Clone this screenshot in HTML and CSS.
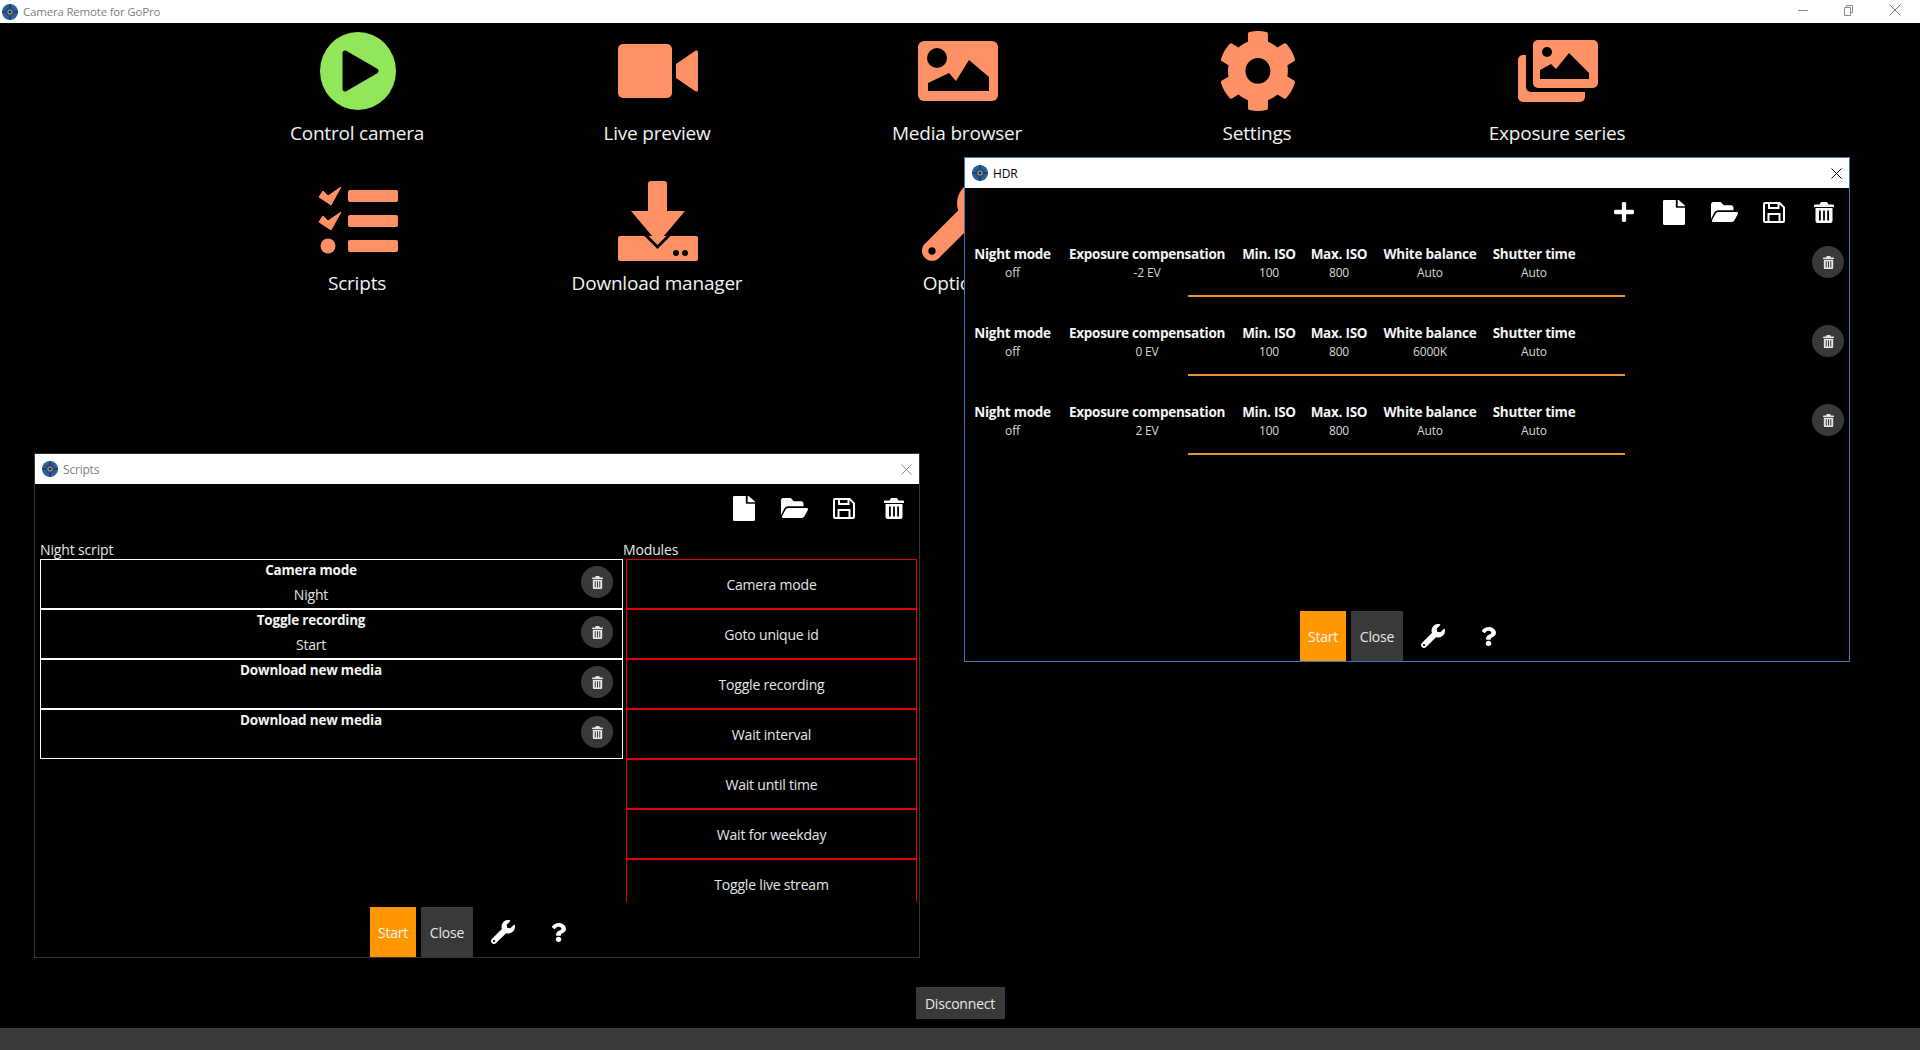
FILE: index.html
```html
<!DOCTYPE html>
<html lang="en">
<head>
<meta charset="utf-8">
<title>Camera Remote for GoPro</title>
<link rel="stylesheet" href="styles.css">
</head>
<body>
<svg class="defs" aria-hidden="true">
  <defs>
    <symbol id="appicon" viewBox="0 0 16 16">
      <circle cx="8" cy="8" r="8" fill="#2a62a0"/>
      <path d="M0 8h16M8 0v16" stroke="#123a66" stroke-width="1.5"/>
      <circle cx="8" cy="8" r="4.6" fill="#33475a"/>
      <circle cx="8" cy="8" r="2.6" fill="#8a99a6"/>
      <circle cx="8" cy="8" r="1.3" fill="#1a2530"/>
    </symbol>
    <symbol id="plus" viewBox="0 32 448 448" preserveAspectRatio="none"><path d="M416 208H272V64c0-17.67-14.33-32-32-32h-32c-17.67 0-32 14.33-32 32v144H32c-17.67 0-32 14.33-32 32v32c0 17.67 14.33 32 32 32h144v144c0 17.67 14.33 32 32 32h32c17.67 0 32-14.33 32-32V304h144c17.67 0 32-14.33 32-32v-32c0-17.67-14.33-32-32-32z"/></symbol>
    <symbol id="file" viewBox="0 0 384 512" preserveAspectRatio="none"><path d="M224 136V0H24C10.7 0 0 10.7 0 24v464c0 13.3 10.7 24 24 24h336c13.3 0 24-10.7 24-24V160H248c-13.2 0-24-10.8-24-24zm160-14.1v6.1H256V0h6.1c6.4 0 12.5 2.5 17 7l97.9 98c4.5 4.5 7 10.6 7 16.9z"/></symbol>
    <symbol id="folder" viewBox="0 64 576 384" preserveAspectRatio="none"><path d="M572.694 292.093L500.27 416.248A63.997 63.997 0 0 1 444.989 448H45.025c-18.523 0-30.064-20.093-20.731-36.093l72.424-124.155A64 64 0 0 1 152 256h399.964c18.523 0 30.064 20.093 20.73 36.093zM152 224h328v-48c0-26.51-21.49-48-48-48H272l-64-64H48C21.49 64 0 85.49 0 112v278.046l69.077-118.418C86.214 242.25 117.989 224 152 224z"/></symbol>
    <symbol id="save" viewBox="0 0 22 21" preserveAspectRatio="none"><path fill-rule="evenodd" d="M2 0h15l5 5v14a2 2 0 0 1-2 2H2a2 2 0 0 1-2-2V2a2 2 0 0 1 2-2zM2 2v17h2.500v-8h13v8H20V5.800L16.500 2.300V7H5V2zM7 2v3h7.500V2zM6.500 13v6h9v-6z"/></symbol>
    <symbol id="trash" viewBox="0 0 20 21" preserveAspectRatio="none"><path fill-rule="evenodd" d="M7 0h6l1.500 2.500H19a1 1 0 0 1 1 1V5H0V3.500a1 1 0 0 1 1-1h4.500zM1.500 6h17v13a2 2 0 0 1-2 2h-13a2 2 0 0 1-2-2zM5 8.500v10h1.800v-10zM9.100 8.500v10h1.800v-10zM13.200 8.500v10H15v-10z"/></symbol>
    <symbol id="wrench" viewBox="0 0 512 512" preserveAspectRatio="none"><path d="M507.73 109.1c-2.24-9.03-13.54-12.09-20.12-5.51l-74.36 74.36-67.88-11.31-11.31-67.88 74.36-74.36c6.62-6.62 3.43-17.9-5.66-20.16-47.38-11.74-99.55.91-136.58 37.93-39.64 39.64-50.55 97.1-34.05 147.2L18.74 402.76c-24.99 24.99-24.99 65.51 0 90.5 24.99 24.99 65.51 24.99 90.5 0l213.21-213.21c50.12 16.71 107.47 5.68 147.37-34.22 37.07-37.07 49.7-89.32 37.91-136.73zM64 472c-13.25 0-24-10.75-24-24 0-13.26 10.75-24 24-24s24 10.74 24 24c0 13.25-10.75 24-24 24z"/></symbol>
    <symbol id="question" viewBox="29 0 349 512" preserveAspectRatio="none"><path d="M202.021 0C122.202 0 70.503 32.703 29.914 91.026c-7.363 10.58-5.093 25.086 5.178 32.874l43.138 32.709c10.373 7.865 25.132 6.026 33.253-4.148 25.049-31.381 43.63-49.449 82.757-49.449 30.764 0 68.816 19.799 68.816 49.631 0 22.552-18.617 34.134-48.993 51.164-35.423 19.86-82.299 44.576-82.299 106.405V320c0 13.255 10.745 24 24 24h72.471c13.255 0 24-10.745 24-24v-5.773c0-42.86 125.268-44.645 125.268-160.627C377.504 66.256 286.902 0 202.021 0zM192 373.459c-38.196 0-69.271 31.075-69.271 69.271 0 38.195 31.075 69.27 69.271 69.27s69.271-31.075 69.271-69.271-31.075-69.27-69.271-69.27z"/></symbol>
  </defs>
</svg>

<div class="app">
  <header class="titlebar">
    <svg class="app-icon"><use href="#appicon"/></svg>
    <span class="title-text">Camera Remote for GoPro</span>
    <div class="win-controls">
      <svg class="ctl" viewBox="0 0 12 12"><path d="M1 6.500h10" stroke="#888" fill="none"/></svg>
      <svg class="ctl" viewBox="0 0 12 12"><path d="M1.500 3.500h6v8h-6zM3.500 3.500v-2h6v7h-2" stroke="#888" fill="none"/></svg>
      <svg class="ctl" viewBox="0 0 12 12"><path d="M.5.500l11 11M11.500.500l-11 11" stroke="#777" fill="none"/></svg>
    </div>
  </header>

  <main class="launcher">
    <div class="tile">
      <svg class="tile-icon" viewBox="0 0 100 80">
        <ellipse cx="51" cy="40" rx="38" ry="39" fill="#92e65a"/>
        <path d="M38 22 L69 40 L38 58 Z" fill="#000" stroke="#000" stroke-width="5" stroke-linejoin="round"/>
      </svg>
      <span class="tile-label">Control camera</span>
    </div>
    <div class="tile">
      <svg class="tile-icon" viewBox="0 0 100 80">
        <rect x="11" y="13" width="54" height="54" rx="5" fill="#ff9166"/>
        <path d="M69 33 L88 20 Q91 18 91 22 V58 Q91 62 88 60 L69 47 Z" fill="#ff9166"/>
      </svg>
      <span class="tile-label">Live preview</span>
    </div>
    <div class="tile">
      <svg class="tile-icon" viewBox="0 0 100 80">
        <rect x="11" y="10" width="80" height="60" rx="6" fill="#ff9166"/>
        <circle cx="30" cy="27" r="10" fill="#000"/>
        <path d="M21 60 V52 L42 42 L49 50 L62 29 L82 46 V60 Z" fill="#000"/>
      </svg>
      <span class="tile-label">Media browser</span>
    </div>
    <div class="tile">
      <svg class="tile-icon" viewBox="0 0 100 80">
        <g transform="translate(11 -1.250) scale(.156 .161)"><path fill="#ff9166" d="M487.400 315.700l-42.600-24.600c4.300-23.200 4.300-47 0-70.200l42.600-24.600c4.900-2.800 7.100-8.600 5.500-14-11.100-35.600-30-67.800-54.700-94.600-3.800-4.100-10-5.100-14.800-2.300L380.800 110c-17.900-15.400-38.500-27.300-60.800-35.100V25.800c0-5.600-3.900-10.500-9.400-11.700-36.700-8.200-74.300-7.800-109.200 0-5.500 1.200-9.400 6.100-9.400 11.700V75c-22.200 7.900-42.800 19.800-60.800 35.100L88.700 85.500c-4.900-2.800-11-1.900-14.800 2.300-24.700 26.700-43.600 58.900-54.700 94.600-1.700 5.400.6 11.200 5.500 14L67.300 221c-4.300 23.200-4.300 47 0 70.200l-42.600 24.600c-4.900 2.800-7.100 8.600-5.500 14 11.100 35.600 30 67.800 54.700 94.600 3.800 4.100 10 5.100 14.800 2.300l42.600-24.600c17.900 15.400 38.500 27.300 60.800 35.100v49.200c0 5.600 3.900 10.500 9.400 11.700 36.700 8.200 74.300 7.800 109.200 0 5.500-1.200 9.400-6.100 9.400-11.700v-49.200c22.200-7.900 42.800-19.800 60.800-35.100l42.600 24.600c4.900 2.800 11 1.900 14.800-2.300 24.700-26.700 43.600-58.900 54.700-94.600 1.500-5.500-.7-11.300-5.600-14.100zM256 336c-44.100 0-80-35.900-80-80s35.900-80 80-80 80 35.900 80 80-35.900 80-80 80z"/></g>
      </svg>
      <span class="tile-label">Settings</span>
    </div>
    <div class="tile">
      <svg class="tile-icon" viewBox="0 0 100 80">
        <rect x="11" y="24" width="67" height="47" rx="5" fill="#ff9166"/>
        <rect x="19" y="5" width="76" height="56" rx="5" fill="#000"/>
        <rect x="26" y="9" width="65" height="48" rx="5" fill="#ff9166"/>
        <circle cx="40" cy="21" r="5" fill="#000"/>
        <path d="M33 48 V39 L44 33 L49 38 L62 22 L82 42 V48 Z" fill="#000"/>
      </svg>
      <span class="tile-label">Exposure series</span>
    </div>
    <div class="tile">
      <svg class="tile-icon" viewBox="0 0 100 80">
        <g fill="#ff9166" stroke="#ff9166" stroke-linejoin="round">
          <path d="M12 16 L16 10 L21 15 L34 6 L24 24 Z"/>
          <path d="M12 41 L16 35 L21 40 L34 31 L24 49 Z"/>
        </g>
        <circle cx="21" cy="65" r="7.500" fill="#ff9166"/>
        <rect x="41" y="9" width="50" height="12" rx="2" fill="#ff9166"/>
        <rect x="41" y="34" width="50" height="12" rx="2" fill="#ff9166"/>
        <rect x="41" y="59" width="50" height="12" rx="2" fill="#ff9166"/>
      </svg>
      <span class="tile-label">Scripts</span>
    </div>
    <div class="tile">
      <svg class="tile-icon" viewBox="0 0 100 80">
        <rect x="11" y="55" width="80" height="25" rx="2" fill="#ff9166"/>
        <path d="M41 3 a3 3 0 0 1 3-3h13a3 3 0 0 1 3 3 V30 H78 L51 62 L24 30 H41 Z" fill="#ff9166"/>
        <path d="M33 55 L51 66 L69 55" fill="none" stroke="#000" stroke-width="0"/>
        <path d="M36 55 L51 68 L66 55" fill="none" stroke="#000" stroke-width="0"/>
        <path d="M38 53.500 L50.500 66 L63 53.500" fill="none" stroke="#000" stroke-width="3"/>
        <circle cx="69" cy="72" r="3" fill="#000"/>
        <circle cx="78" cy="72" r="3" fill="#000"/>
      </svg>
      <span class="tile-label">Download manager</span>
    </div>
    <div class="tile">
      <svg class="tile-icon" viewBox="0 0 100 80">
        <g transform="translate(15 0) scale(.156)"><path fill="#ff9166" d="M507.730 109.100c-2.240-9.030-13.540-12.090-20.120-5.510l-74.360 74.360-67.880-11.310-11.310-67.880 74.360-74.360c6.620-6.620 3.430-17.900-5.660-20.160-47.380-11.740-99.550.91-136.580 37.930-39.640 39.640-50.550 97.100-34.050 147.200L18.740 402.760c-24.990 24.990-24.990 65.510 0 90.500 24.990 24.990 65.510 24.990 90.500 0l213.210-213.210c50.120 16.710 107.470 5.680 147.370-34.220 37.070-37.070 49.700-89.320 37.910-136.730zM64 472c-13.250 0-24-10.750-24-24 0-13.260 10.750-24 24-24s24 10.740 24 24c0 13.250-10.750 24-24 24z"/></g>
      </svg>
      <span class="tile-label">Options</span>
    </div>
  </main>

  <div class="disconnect-row"><button class="btn btn-disconnect">Disconnect</button></div>
  <footer class="statusbar"></footer>

  <section class="window window-scripts">
    <div class="win-title">
      <svg class="win-icon"><use href="#appicon"/></svg>
      <span class="win-name">Scripts</span>
      <svg class="win-close" viewBox="0 0 11 11"><path d="M.5.500l10 10M10.500.500l-10 10" fill="none"/></svg>
    </div>
    <div class="toolbar">
      <span class="tool"><svg class="ti ti-file"><use href="#file"/></svg></span>
      <span class="tool"><svg class="ti ti-folder"><use href="#folder"/></svg></span>
      <span class="tool"><svg class="ti ti-save"><use href="#save"/></svg></span>
      <span class="tool"><svg class="ti ti-trash"><use href="#trash"/></svg></span>
    </div>
    <div class="script-body">
      <div class="script-col">
        <div class="col-label">Night script</div>
        <div class="script-item">
          <div class="item-text"><div class="item-head">Camera mode</div><div class="item-sub">Night</div></div>
          <button class="round-del"><svg class="del-icon"><use href="#trash"/></svg></button>
        </div>
        <div class="script-item">
          <div class="item-text"><div class="item-head">Toggle recording</div><div class="item-sub">Start</div></div>
          <button class="round-del"><svg class="del-icon"><use href="#trash"/></svg></button>
        </div>
        <div class="script-item">
          <div class="item-text"><div class="item-head">Download new media</div></div>
          <button class="round-del"><svg class="del-icon"><use href="#trash"/></svg></button>
        </div>
        <div class="script-item">
          <div class="item-text"><div class="item-head">Download new media</div></div>
          <button class="round-del"><svg class="del-icon"><use href="#trash"/></svg></button>
        </div>
      </div>
      <div class="module-col">
        <div class="col-label">Modules</div>
        <div class="module-list">
          <div class="module">Camera mode</div>
          <div class="module">Goto unique id</div>
          <div class="module">Toggle recording</div>
          <div class="module">Wait interval</div>
          <div class="module">Wait until time</div>
          <div class="module">Wait for weekday</div>
          <div class="module">Toggle live stream</div>
        </div>
      </div>
    </div>
    <div class="win-footer">
      <button class="btn btn-start">Start</button>
      <button class="btn btn-close">Close</button>
      <svg class="fi fi-wrench"><use href="#wrench"/></svg>
      <svg class="fi fi-help"><use href="#question"/></svg>
    </div>
  </section>

  <section class="window window-hdr">
    <div class="win-title">
      <svg class="win-icon"><use href="#appicon"/></svg>
      <span class="win-name">HDR</span>
      <svg class="win-close" viewBox="0 0 11 11"><path d="M.5.500l10 10M10.500.500l-10 10" fill="none"/></svg>
    </div>
    <div class="toolbar">
      <span class="tool"><svg class="ti ti-plus"><use href="#plus"/></svg></span>
      <span class="tool"><svg class="ti ti-file"><use href="#file"/></svg></span>
      <span class="tool"><svg class="ti ti-folder"><use href="#folder"/></svg></span>
      <span class="tool"><svg class="ti ti-save"><use href="#save"/></svg></span>
      <span class="tool"><svg class="ti ti-trash"><use href="#trash"/></svg></span>
    </div>
    <div class="hdr-rows">
      <div class="hdr-row">
        <div class="hdr-grid">
          <b>Night mode</b><b>Exposure compensation</b><b>Min. ISO</b><b>Max. ISO</b><b>White balance</b><b>Shutter time</b>
          <span>off</span><span>-2 EV</span><span>100</span><span>800</span><span>Auto</span><span>Auto</span>
        </div>
        <div class="hdr-line"></div>
        <button class="round-del hdr-del"><svg class="del-icon"><use href="#trash"/></svg></button>
      </div>
      <div class="hdr-row">
        <div class="hdr-grid">
          <b>Night mode</b><b>Exposure compensation</b><b>Min. ISO</b><b>Max. ISO</b><b>White balance</b><b>Shutter time</b>
          <span>off</span><span>0 EV</span><span>100</span><span>800</span><span>6000K</span><span>Auto</span>
        </div>
        <div class="hdr-line"></div>
        <button class="round-del hdr-del"><svg class="del-icon"><use href="#trash"/></svg></button>
      </div>
      <div class="hdr-row">
        <div class="hdr-grid">
          <b>Night mode</b><b>Exposure compensation</b><b>Min. ISO</b><b>Max. ISO</b><b>White balance</b><b>Shutter time</b>
          <span>off</span><span>2 EV</span><span>100</span><span>800</span><span>Auto</span><span>Auto</span>
        </div>
        <div class="hdr-line"></div>
        <button class="round-del hdr-del"><svg class="del-icon"><use href="#trash"/></svg></button>
      </div>
    </div>
    <div class="win-footer">
      <button class="btn btn-start">Start</button>
      <button class="btn btn-close">Close</button>
      <svg class="fi fi-wrench"><use href="#wrench"/></svg>
      <svg class="fi fi-help"><use href="#question"/></svg>
    </div>
  </section>
</div>
</body>
</html>
```

FILE: styles.css
```css
* { box-sizing: border-box; }
html, body { margin: 0; padding: 0; background: #000; }
body {
  font-family: "Open Sans", "Noto Sans", "Liberation Sans", sans-serif;
  color: #fff;
  overflow: hidden;
}
.defs { position: absolute; width: 0; height: 0; }
.app {
  position: relative;
  width: 1920px;
  height: 1050px;
  display: flex;
  flex-direction: column;
  background: #000;
  overflow: hidden;
}

/* main title bar */
.titlebar {
  flex: 0 0 23px;
  background: #fff;
  display: flex;
  align-items: center;
  padding-left: 2px;
}
.app-icon { width: 16px; height: 16px; }
.title-text { margin-left: 5px; font-size: 11.500px; letter-spacing: -.2px; color: #808080; }
.win-controls { margin-left: auto; display: flex; gap: 34px; padding-right: 19px; margin-top: -3px; }
.ctl { width: 12px; height: 12px; }

/* launcher grid */
.launcher {
  flex: 1;
  width: 1500px;
  margin-left: 207px;
  padding-top: 8px;
  display: grid;
  grid-template-columns: repeat(5, 300px);
  grid-auto-rows: 150px;
}
.tile { display: flex; flex-direction: column; align-items: center; }
.tile-icon { width: 100px; height: 80px; }
.tile-label { margin-top: 9px; font-size: 19px; line-height: 27px; letter-spacing: -.2px; color: #f2f2f2; }

/* bottom */
.disconnect-row { flex: 0 0 41px; display: flex; justify-content: center; align-items: flex-start; }
.statusbar { flex: 0 0 22px; background: #393939; }
.btn {
  border: 0;
  padding: 0;
  font-family: inherit;
  font-size: 14px;
  letter-spacing: -.2px;
  color: #e8e8e8;
  background: #393939;
}
.btn-disconnect { width: 89px; height: 32px; }

/* floating windows */
.window {
  position: absolute;
  width: 886px;
  height: 505px;
  background: #000;
  border: 1px solid #333;
  display: flex;
  flex-direction: column;
}
.window-scripts { left: 34px; top: 453px; }
.window-hdr { left: 964px; top: 157px; border-color: #3f78b8; }
.win-title {
  flex: 0 0 30px;
  background: #fff;
  display: flex;
  align-items: center;
  padding: 0 7px 0 7px;
}
.win-icon { width: 16px; height: 16px; }
.win-name { margin-left: 5px; font-size: 12px; letter-spacing: -.2px; color: #000; }
.window-scripts .win-name { color: #808080; }
.win-close { margin-left: auto; width: 11px; height: 11px; stroke: #000; }
.window-scripts .win-close { stroke: #888; }

.toolbar { flex: 0 0 56px; display: flex; justify-content: flex-end; padding-top: 0; }
.tool { width: 50px; height: 50px; display: flex; align-items: center; justify-content: center; margin-top: -1px; }
.ti { fill: #fff; }
.ti-plus { width: 20px; height: 20px; }
.ti-file { width: 22px; height: 25px; }
.ti-folder { width: 27px; height: 20px; }
.ti-save { width: 22px; height: 21px; }
.ti-trash { width: 20px; height: 21px; }

.win-footer {
  flex: 0 0 50px;
  display: flex;
  align-items: center;
  padding-left: 335px;
}
.btn-start { width: 46px; height: 50px; background: #ff9800; color: #f5f5f5; }
.btn-close { width: 52px; height: 50px; margin-left: 5px; }
.fi { fill: #fff; }
.fi-wrench { width: 24px; height: 24px; margin-left: 18px; }
.fi-help { width: 14px; height: 19px; margin-left: 37px; }

/* scripts window */
.script-body { flex: 0 0 367px; display: flex; padding-left: 5px; }
.script-col { width: 583px; height: 343px; }
.module-col { width: 296px; height: 362px; }
.col-label { height: 19px; font-size: 14px; line-height: 19px; letter-spacing: -.15px; color: #e6e6e6; }
.script-item {
  height: 50px;
  border: 1px solid #fff;
  display: flex;
  align-items: flex-start;
  padding: 6px 9px 0 0;
}
.item-text { flex: 1; margin-top: -6px; text-align: center; }
.item-head { font-size: 13.500px; font-weight: 700; line-height: 20px; letter-spacing: -.2px; color: #f5f5f5; }
.item-sub { font-size: 14px; line-height: 30px; letter-spacing: -.2px; color: #e0e0e0; }
.round-del {
  width: 32px;
  height: 32px;
  border: 0;
  padding: 0;
  border-radius: 50%;
  background: #393939;
  display: flex;
  align-items: center;
  justify-content: center;
}
.del-icon { width: 11px; height: 13px; fill: #e6e6e6; }
.module-list { height: 343px; overflow: hidden; padding-left: 3px; }
.module {
  width: 291px;
  height: 50px;
  border: 1px solid #e00000;
  display: flex;
  align-items: center;
  justify-content: center;
  font-size: 14px;
  letter-spacing: -.2px;
  color: #e6e6e6;
}

/* HDR window */
.hdr-rows { flex: 0 0 367px; }
.hdr-row { position: relative; height: 79px; padding-left: 6px; }
.hdr-grid {
  display: grid;
  grid-template-columns: 83px 166px 58px 62px 100px 88px;
  column-gap: 10px;
  text-align: center;
}
.hdr-grid b { font-size: 13.500px; line-height: 20px; letter-spacing: -.25px; white-space: nowrap; color: #f5f5f5; }
.hdr-grid span { font-size: 12px; line-height: 18px; letter-spacing: -.15px; color: #d8d8d8; }
.hdr-line { width: 437px; height: 2px; margin: 13px 0 0 217px; background: #e8922e; }
.hdr-del { position: absolute; right: 5px; top: 2px; }
```
